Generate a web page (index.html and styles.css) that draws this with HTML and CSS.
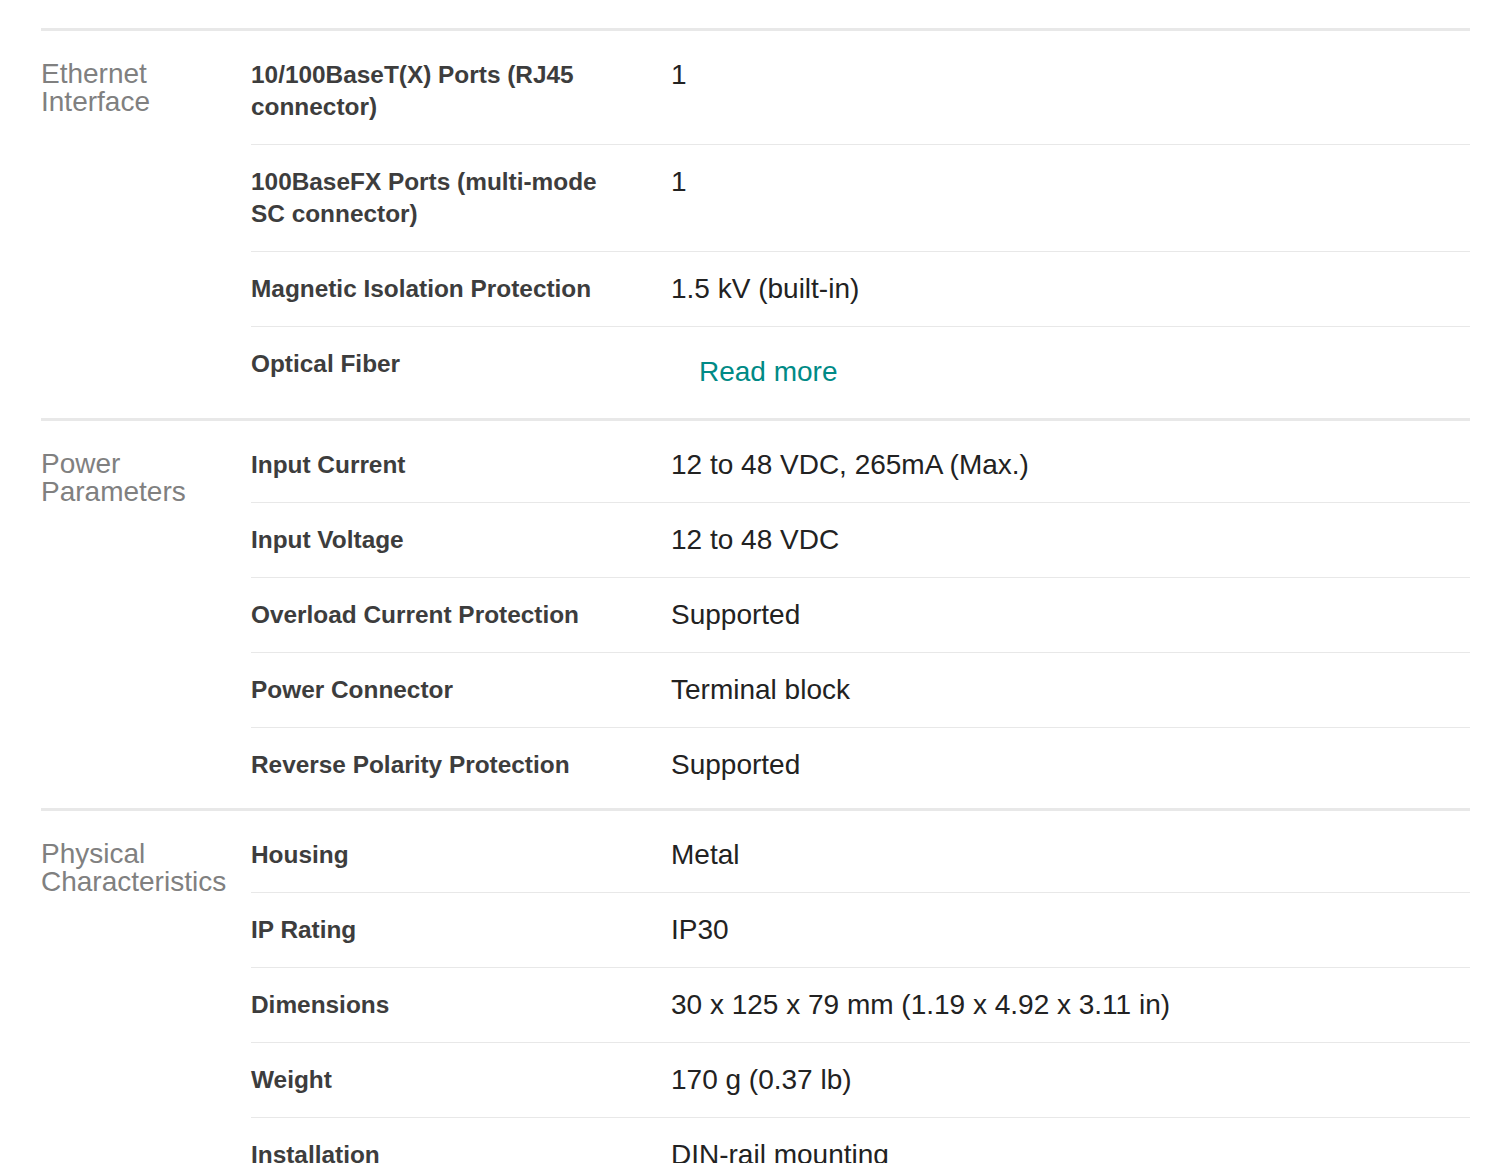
FILE: index.html
```html
<!DOCTYPE html>
<html lang="en">
<head>
<meta charset="utf-8">
<title>Specifications</title>
<link rel="stylesheet" href="styles.css">
</head>
<body>
<div class="specs">
  <section class="group">
    <h3 class="group-title">Ethernet Interface</h3>
    <div class="rows">
      <div class="row"><div class="name">10/100BaseT(X) Ports (RJ45 connector)</div><div class="value">1</div></div>
      <div class="row"><div class="name">100BaseFX Ports (multi-mode SC connector)</div><div class="value">1</div></div>
      <div class="row"><div class="name">Magnetic Isolation Protection</div><div class="value">1.5 kV (built-in)</div></div>
      <div class="row"><div class="name">Optical Fiber</div><div class="value"><a class="read-more" href="#">Read more</a></div></div>
    </div>
  </section>
  <section class="group">
    <h3 class="group-title">Power Parameters</h3>
    <div class="rows">
      <div class="row"><div class="name">Input Current</div><div class="value">12 to 48 VDC, 265mA (Max.)</div></div>
      <div class="row"><div class="name">Input Voltage</div><div class="value">12 to 48 VDC</div></div>
      <div class="row"><div class="name">Overload Current Protection</div><div class="value">Supported</div></div>
      <div class="row"><div class="name">Power Connector</div><div class="value">Terminal block</div></div>
      <div class="row"><div class="name">Reverse Polarity Protection</div><div class="value">Supported</div></div>
    </div>
  </section>
  <section class="group">
    <h3 class="group-title">Physical Characteristics</h3>
    <div class="rows">
      <div class="row"><div class="name">Housing</div><div class="value">Metal</div></div>
      <div class="row"><div class="name">IP Rating</div><div class="value">IP30</div></div>
      <div class="row"><div class="name">Dimensions</div><div class="value">30 x 125 x 79 mm (1.19 x 4.92 x 3.11 in)</div></div>
      <div class="row"><div class="name">Weight</div><div class="value">170 g (0.37 lb)</div></div>
      <div class="row"><div class="name">Installation</div><div class="value">DIN-rail mounting</div></div>
    </div>
  </section>
</div>
</body>
</html>
```

FILE: styles.css
```css
html, body {
  margin: 0;
  padding: 0;
  background: #ffffff;
}

body {
  font-family: "Liberation Sans", Arial, sans-serif;
  overflow: hidden;
}

.specs {
  margin: 28px 35px 0 41px;
}

.group {
  display: grid;
  grid-template-columns: 210px 1fr;
  border-top: 3px solid #e8e8e8;
}

.group-title {
  margin: 0;
  padding-top: 29px;
  font-size: 28px;
  line-height: 28px;
  font-weight: normal;
  color: #808080;
}

.rows {
  padding: 7px 0 6px;
}

.row {
  display: grid;
  grid-template-columns: 420px 1fr;
  padding: 21px 0;
  border-bottom: 1px solid #e8e8e8;
}

.row:last-child {
  border-bottom: none;
}

.name {
  font-size: 24.4px;
  line-height: 32px;
  font-weight: bold;
  color: #3d3d3d;
  padding-right: 40px;
}

.value {
  font-size: 28px;
  line-height: 31px;
  color: #222222;
}

.read-more {
  display: inline-block;
  padding: 8px 28px 4px;
  font-size: 28px;
  line-height: 31px;
  color: #008a86;
  text-decoration: none;
}
```
